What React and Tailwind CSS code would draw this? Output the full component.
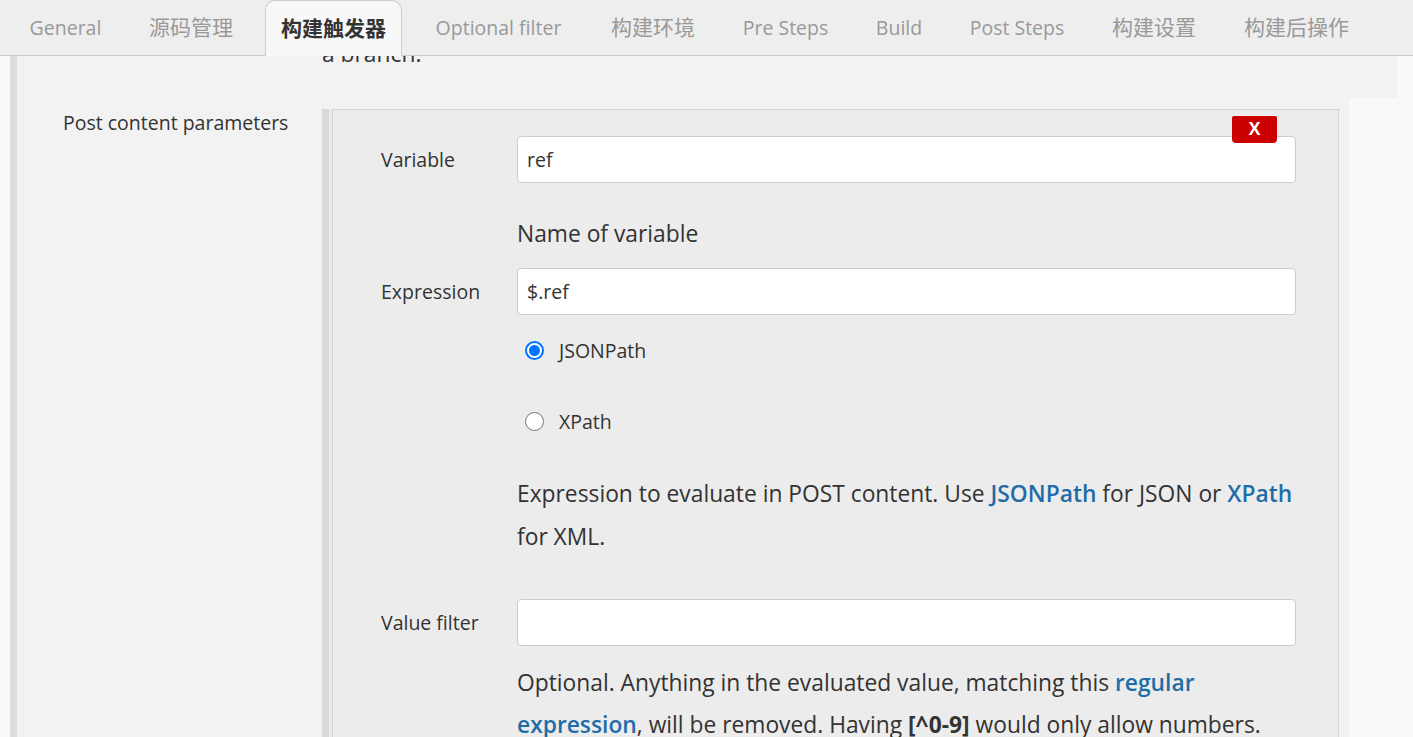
import React from 'react';

const tabs = [
  { label: 'General', w: 'w-[103px]', cjk: false },
  { label: '源码管理', w: 'w-[116px]', cjk: true },
  { label: '构建触发器', w: 'w-[137px]', cjk: true, active: true },
  { label: 'Optional filter', w: 'w-[161px]', cjk: false },
  { label: '构建环境', w: 'w-[116px]', cjk: true },
  { label: 'Pre Steps', w: 'w-[117px]', cjk: false },
  { label: 'Build', w: 'w-[78px]', cjk: false },
  { label: 'Post Steps', w: 'w-[126px]', cjk: false },
  { label: '构建设置', w: 'w-[116px]', cjk: true },
  { label: '构建后操作', w: 'w-[137px]', cjk: true },
];

function Radio({ checked, label }) {
  return (
    <div className="h-[71px] flex items-center">
      {checked ? (
        <span className="ml-[8px] w-[19px] h-[19px] rounded-full border-2 border-[#0075ff] bg-white flex items-center justify-center">
          <span className="w-[11px] h-[11px] rounded-full bg-[#0075ff]" />
        </span>
      ) : (
        <span className="ml-[8px] w-[19px] h-[19px] rounded-full border border-[#767676] bg-white" />
      )}
      <span className="ml-[15px] text-[19.5px] text-[#333]">{label}</span>
    </div>
  );
}

function Field({ label, value }) {
  return (
    <div className="flex items-center">
      <div className="w-[136px] text-[19.5px] text-[#333]">{label}</div>
      <div className="w-[779px] h-[47px] bg-white border border-[#cccccc] rounded-[4px] flex items-center pl-[9px] text-[19.5px] text-[#333]">
        {value}
      </div>
    </div>
  );
}

export default function App() {
  return (
    <div className="w-[1413px] h-[737px] overflow-hidden bg-[#f9f9f9] font-['Open_Sans','Noto_Sans_CJK_SC',sans-serif]">
      {/* tab bar */}
      <div className="h-[56px] bg-[#eeeeee] border-b border-[#cccccc] flex items-end gap-4 pl-[14px] relative z-10">
        {tabs.map((t) => (
          <div
            key={t.label}
            className={
              t.active
                ? `${t.w} h-[56px] -mb-px bg-[#f8f8f8] border border-b-0 border-[#cccccc] rounded-t-[10px] flex items-center justify-center text-[21px] font-bold text-[#333] whitespace-nowrap`
                : `${t.w} h-[55px] flex items-center justify-center text-[#999] whitespace-nowrap ${t.cjk ? 'text-[21px]' : 'text-[19.5px]'}`
            }
          >
            {t.label}
          </div>
        ))}
      </div>

      <div className="flex pl-[10px]">
        <div className="w-[7px] bg-[#dddddd]" />
        <div className="flex flex-col">
          {/* clipped help line from previous field */}
          <div className="w-[1380px] h-[42px] bg-[#f2f2f2] overflow-hidden">
            <div className="ml-[305px] -mt-[24px] leading-[43px] text-[22.8px] text-[#333]">a branch.</div>
          </div>

          {/* post content parameters row */}
          <div className="w-[1332px] bg-[#f2f2f2] flex h-[700px]">
            <div className="w-[305px] pl-[46px] pt-[11px] leading-[28px] text-[19.5px] text-[#333]">
              Post content parameters
            </div>
            <div className="mt-[11px] flex flex-1">
              <div className="w-[7px] bg-[#d9d9d9]" />
              <div className="w-[3px] bg-[#ebebeb]" />
              <div className="relative w-[1007px] bg-[#ececec] border border-[#d4d4d4] pl-[48px] pt-[26px]">
                <button className="absolute top-[6px] right-[61px] w-[45px] h-[27px] bg-[#cc0000] rounded-b-[4px] rounded-t-[2px] text-white font-bold text-[18px] font-['Liberation_Sans',sans-serif] flex items-center justify-center">
                  X
                </button>

                <Field label="Variable" value="ref" />
                <div className="ml-[136px] mt-[29px] leading-[43px] text-[22.8px] text-[#333]">Name of variable</div>

                <div className="mt-[13px]">
                  <Field label="Expression" value="$.ref" />
                </div>
                <div className="ml-[136px]">
                  <Radio checked label="JSONPath" />
                  <Radio label="XPath" />
                </div>
                <div className="ml-[136px] mt-[15px] leading-[43px] text-[22.8px] text-[#333] whitespace-nowrap">
                  Expression to evaluate in POST content. Use{' '}
                  <a className="font-semibold text-[#1f6da8]">JSONPath</a> for JSON or{' '}
                  <a className="font-semibold text-[#1f6da8]">XPath</a>
                  <br />
                  for XML.
                </div>

                <div className="mt-[41px]">
                  <Field label="Value filter" value="" />
                </div>
                <div className="ml-[136px] mt-[16px] leading-[42px] text-[22.8px] text-[#333] whitespace-nowrap">
                  Optional. Anything in the evaluated value, matching this{' '}
                  <a className="font-semibold text-[#1f6da8]">regular</a>
                  <br />
                  <a className="font-semibold text-[#1f6da8]">expression</a>, will be removed. Having{' '}
                  <b>[^0-9]</b> would only allow numbers.
                </div>
              </div>
            </div>
          </div>
        </div>
      </div>
    </div>
  );
}
